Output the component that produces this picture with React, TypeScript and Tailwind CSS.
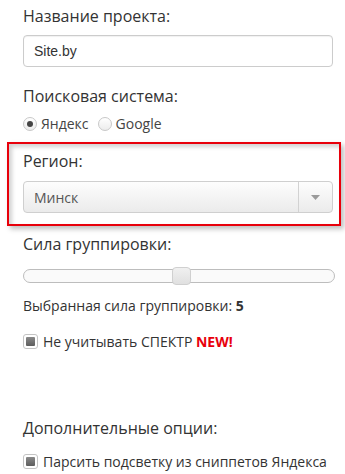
import React from "react";

function Radio({ checked, label }: { checked?: boolean; label: string }) {
  return (
    <label className="flex items-center gap-[4px]">
      <span className="w-[14px] h-[14px] rounded-full border border-[#c8c8c8] bg-gradient-to-b from-[#ffffff] to-[#ececec] flex items-center justify-center">
        {checked && <span className="w-[6px] h-[6px] rounded-full bg-[#444]" />}
      </span>
      <span>{label}</span>
    </label>
  );
}

function Checkbox({ children }: { children: React.ReactNode }) {
  return (
    <div className="flex items-center gap-[5px] text-[14px] text-[#333]">
      <span className="w-[15px] h-[15px] rounded-[3px] border border-[#c4c4c4] bg-white flex items-center justify-center">
        <span className="w-[9px] h-[9px] rounded-[1px] bg-gradient-to-b from-[#8a8a8a] to-[#5e5e5e]" />
      </span>
      <span>{children}</span>
    </div>
  );
}

export default function App() {
  return (
    <div
      className="w-[345px] h-[474px] bg-white text-[#333] overflow-hidden"
      style={{ fontFamily: '"Open Sans", Arial, sans-serif' }}
    >
      <div className="pl-[23px] pr-[12px] pt-[5px]">
        {/* ─── Project name ──────── */}
        <div className="text-[16px] leading-[22px]">Название проекта:</div>
        <div className="mt-[8px] h-[32px] rounded-[4px] border border-[#cccccc] px-[10px] flex items-center text-[14px] text-[#333] font-[family-name:Liberation_Sans,Arial,sans-serif] shadow-[inset_0_1px_1px_rgba(0,0,0,0.06)]">
          Site.by
        </div>

        {/* ─── Search engine ──────── */}
        <div className="mt-[18px] text-[16px] leading-[22px]">Поисковая система:</div>
        <div className="mt-[8px] flex items-center gap-[9px] text-[14px] leading-[18px] text-[#444]">
          <Radio checked label="Яндекс" />
          <Radio label="Google" />
        </div>
      </div>

      {/* ─── Region (highlighted) ──────── */}
      <div className="ml-[7px] mr-[4px] mt-[9px] h-[84px] border-2 border-[#e8000b] pl-[14px] pr-[6px] pt-[6px] shadow-[inset_3px_3px_4px_rgba(0,0,0,0.18),3px_3px_5px_rgba(0,0,0,0.25)]">
        <div className="text-[16px] leading-[22px]">Регион:</div>
        <div className="mt-[9px] h-[32px] rounded-[4px] border border-[#cfcfcf] bg-gradient-to-b from-[#fdfdfd] to-[#ebebeb] flex items-stretch">
          <div className="flex-1 flex items-center pl-[10px] text-[14px] text-[#555]">Минск</div>
          <div className="w-[34px] border-l border-[#d2d2d2] flex items-center justify-center">
            <svg width="9" height="5" viewBox="0 0 9 5">
              <path d="M0 0 L9 0 L4.5 5 Z" fill="#9a9a9a" />
            </svg>
          </div>
        </div>
      </div>

      <div className="pl-[23px] pr-[10px]">
        {/* ─── Grouping strength ──────── */}
        <div className="mt-[7px] text-[16px] leading-[22px]">Сила группировки:</div>
        <div className="relative mt-[14px] h-[14px] rounded-full border border-[#bdbdbd] bg-[#fafafa]">
          <div className="absolute left-[148px] top-[-3px] w-[19px] h-[18px] rounded-[4px] border border-[#d0d0d0] bg-gradient-to-b from-[#f0f0f0] to-[#e0e0e0]" />
        </div>
        <div className="mt-[13px] text-[14px] leading-[20px] text-[#333]">
          Выбранная сила группировки: <b className="font-bold">5</b>
        </div>
        <div className="mt-[15px]">
          <Checkbox>
            Не учитывать СПЕКТР <b className="font-bold text-[#e8000b]">NEW!</b>
          </Checkbox>
        </div>

        {/* ─── Extra options ──────── */}
        <div className="mt-[65px] text-[16px] leading-[22px]">Дополнительные опции:</div>
        <div className="mt-[12px]">
          <Checkbox>Парсить подсветку из сниппетов Яндекса</Checkbox>
        </div>
      </div>
    </div>
  );
}
